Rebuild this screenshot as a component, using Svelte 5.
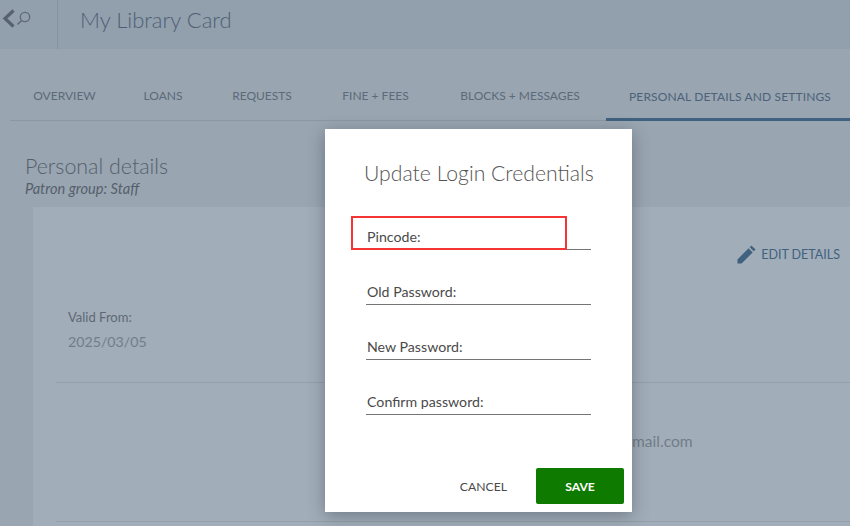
<script>
	let tabs = ['Overview', 'Loans', 'Requests', 'Fine + Fees', 'Blocks + Messages', 'Personal details and settings'];
	let active = tabs.length - 1;
	let fields = ['Pincode:', 'Old Password:', 'New Password:', 'Confirm password:'];
</script>

<div class="page">
	<header class="topbar">
		<div class="nav">
			<svg width="32" height="20" viewBox="0 0 32 20">
				<path d="M13.5 1.5 L5 9.5 L13.5 17.5" fill="none" stroke="#56626d" stroke-width="3.2" />
				<circle cx="25" cy="8" r="4.7" fill="none" stroke="#5e6a75" stroke-width="1.3" />
				<path d="M21.5 11.5 L17.5 15.5" fill="none" stroke="#5e6a75" stroke-width="1.6" />
			</svg>
		</div>
		<h1>My Library Card</h1>
	</header>

	<nav class="tabs">
		{#each tabs as tab, i}
			<div class="tab" class:active={i === active}>{tab}</div>
		{/each}
	</nav>

	<section class="details">
		<h2>Personal details</h2>
		<p class="group">Patron group: Staff</p>
		<div class="card">
			<div class="edit">
				<svg width="19" height="19" viewBox="0 0 20 20">
					<path d="M0.5 19.5 V15.2 L12.2 3.5 L16.5 7.8 L4.8 19.5 Z M13.4 2.3 L15.2 0.5 L19.5 4.8 L17.7 6.6 Z" fill="#40617f" />
				</svg>
				<span>Edit details</span>
			</div>
			<div class="row first">
				<div class="label">Valid From:</div>
				<div class="value">2025/03/05</div>
			</div>
			<div class="row second">
				<div class="email">mail.com</div>
			</div>
		</div>
	</section>

	<div class="modal">
		<h3>Update Login Credentials</h3>
		<form>
			{#each fields as field, i}
				<div class="field">
					<label for={'f' + i}>{field}</label>
					<input id={'f' + i} type="password" />
					{#if i === 0}
						<div class="highlight"></div>
					{/if}
				</div>
			{/each}
		</form>
		<div class="actions">
			<button class="cancel" type="button">Cancel</button>
			<button class="save" type="button">Save</button>
		</div>
	</div>
</div>

<style>
	:global(body) {
		margin: 0;
		background-color: #99a5b1;
		overflow: hidden;
	}

	.page {
		position: relative;
		width: 850px;
		height: 526px;
		overflow: hidden;
		background-color: #99a5b1;
		font-family: Lato, "Open Sans", sans-serif;
		color: #56606b;
	}

	.topbar {
		display: flex;
		height: 49px;
		background-color: #929fac;
	}

	.nav {
		width: 58px;
		border-right: 1px solid #86939f;
		box-sizing: border-box;
		padding-top: 9px;
	}

	.nav svg {
		display: block;
	}

	h1 {
		margin: 0 0 0 22px;
		padding-top: 5px;
		font-size: 22px;
		line-height: 30px;
		font-weight: 300;
		color: #4e5f75;
	}

	.tabs {
		display: grid;
		grid-template-columns: 109px 88px 110px 117px 172px 1fr;
		height: 72px;
		margin: 0 0 0 10px;
		box-sizing: border-box;
		border-bottom: 1px solid #8b98a4;
		align-items: end;
	}

	.tab {
		height: 39px;
		box-sizing: border-box;
		padding-top: 6px;
		line-height: 17px;
		font-size: 12px;
		text-align: center;
		text-transform: uppercase;
		color: #5c6a79;
		white-space: nowrap;
	}

	.tab.active {
		padding-left: 23px;
		text-align: left;
		letter-spacing: 0.14px;
		color: #4d6279;
		border-bottom: 3px solid #40617f;
		margin-bottom: -1px;
	}

	.details {
		padding: 32px 0 0 25px;
	}

	h2 {
		margin: 0;
		font-size: 21.4px;
		line-height: 26px;
		font-weight: 300;
		color: #56606b;
	}

	.group {
		margin: 0;
		padding-top: 1px;
		font-size: 14.6px;
		line-height: 18px;
		font-style: italic;
		color: #56606b;
	}

	.card {
		margin: 9px 0 0 8px;
		height: 320px;
		background-color: #a1adb8;
		box-sizing: border-box;
	}

	.edit {
		display: flex;
		justify-content: flex-end;
		align-items: center;
		gap: 5px;
		padding: 37px 10px 0 0;
		height: 20px;
		color: #40617f;
		font-size: 12.5px;
		text-transform: uppercase;
	}

	.row {
		margin-left: 23px;
		border-bottom: 1px solid #939fab;
	}

	.first {
		height: 119px;
		box-sizing: border-box;
		padding: 44px 0 0 12px;
	}

	.label {
		font-size: 13px;
		line-height: 18px;
		color: #5e6975;
	}

	.value {
		margin-top: 6px;
		font-size: 14.2px;
		line-height: 20px;
		color: #727d89;
	}

	.second {
		height: 139px;
		box-sizing: border-box;
		padding: 48px 0 0 576px;
	}

	.email {
		font-size: 15.6px;
		line-height: 20px;
		color: #727d89;
	}

	.modal {
		position: absolute;
		left: 325px;
		top: 129px;
		width: 307px;
		height: 383px;
		box-sizing: border-box;
		padding: 32px 8px 0 39px;
		background-color: #fff;
		box-shadow: 0 4px 16px rgb(40 50 60 / 0.4);
		display: flex;
		flex-direction: column;
	}

	h3 {
		margin: 0;
		font-size: 21.2px;
		line-height: 24px;
		font-weight: 300;
		color: #555;
		white-space: nowrap;
	}

	form {
		margin-top: 30px;
	}

	.field {
		position: relative;
		width: 225px;
		height: 55px;
		margin-left: 2px;
		box-sizing: border-box;
		padding-top: 12px;
	}

	.field label {
		display: block;
		font-size: 14.2px;
		line-height: 20px;
		color: #4a4a4a;
		padding-left: 1px;
	}

	.field input {
		display: block;
		position: absolute;
		left: 0;
		top: 0;
		width: 100%;
		height: 35px;
		box-sizing: border-box;
		border: 0;
		border-bottom: 1px solid #757575;
		background: transparent;
		outline: none;
		padding: 0;
	}

	.highlight {
		position: absolute;
		left: -15px;
		top: 1px;
		width: 216px;
		height: 34px;
		box-sizing: border-box;
		border: 2px solid #f53535;
	}

	.actions {
		position: absolute;
		right: 8px;
		bottom: 8px;
		display: flex;
		align-items: center;
	}

	button {
		font-family: inherit;
		font-size: 12.2px;
		text-transform: uppercase;
		border: 0;
		cursor: pointer;
	}

	.cancel {
		padding: 0;
		margin-right: 29px;
		background: none;
		color: #4a4a4a;
	}

	.save {
		width: 88px;
		height: 36px;
		border-radius: 2px;
		background-color: #0e7a00;
		color: #fff;
		font-weight: 700;
	}
</style>
